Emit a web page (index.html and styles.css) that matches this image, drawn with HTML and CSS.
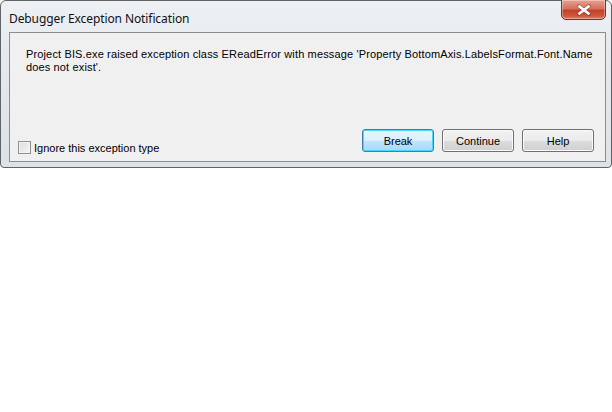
FILE: index.html
```html
<!DOCTYPE html>
<html>
<head>
<meta charset="utf-8">
<link rel="stylesheet" href="styles.css">
</head>
<body>
<div class="window">
  <div class="titlebar">
    <span class="title">Debugger Exception Notification</span>
  </div>
  <div class="close">
    <svg width="16" height="12" viewBox="0 0 16 12">
      <path d="M3 2 L13 10 M13 2 L3 10" stroke="#4a1a10" stroke-width="4" stroke-linecap="round" opacity="0.35"/>
      <path d="M3.5 2.5 L12.5 9.5 M12.5 2.5 L3.5 9.5" stroke="#ffffff" stroke-width="2.6" stroke-linecap="square"/>
    </svg>
  </div>
  <div class="client">
    <p class="message">Project BIS.exe raised exception class EReadError with message 'Property BottomAxis.LabelsFormat.Font.Name<br>does not exist'.</p>
    <div class="footer">
      <label class="check"><span class="box"></span><span>Ignore this exception type</span></label>
      <div class="buttons">
        <button class="btn default">Break</button>
        <button class="btn">Continue</button>
        <button class="btn">Help</button>
      </div>
    </div>
  </div>
</div>
</body>
</html>
```
FILE: styles.css
```css
html, body {
  margin: 0;
  padding: 0;
  background: #ffffff;
}
body {
  width: 612px;
  height: 412px;
  overflow: hidden;
  position: relative;
  font-family: "Liberation Sans", Arial, sans-serif;
}
.window {
  position: relative;
  width: 612px;
  height: 168px;
  box-sizing: border-box;
  border: 1px solid #5f6468;
  border-radius: 6px 6px 4px 4px;
  background: linear-gradient(180deg, #eef1f4 0%, #e6eaee 30%, #dde2e6 100%);
  padding: 0 5px 5px 8px;
  display: flex;
  flex-direction: column;
}
.titlebar {
  height: 31px;
  display: flex;
  align-items: center;
}
.title {
  font-family: "Noto Sans", "Open Sans", sans-serif;
  font-size: 12px;
  color: #111;
  letter-spacing: -0.1px;
  padding-top: 3px;
}
.close {
  position: absolute;
  left: 560px;
  top: -2px;
  width: 45px;
  height: 21px;
  box-sizing: border-box;
  border: 1px solid #7a3226;
  border-radius: 0 0 5px 5px;
  background: linear-gradient(180deg, #e8a293 0%, #d4705c 45%, #c2412a 55%, #d05a3c 85%, #e0806a 100%);
  display: flex;
  align-items: center;
  justify-content: center;
  box-shadow: inset 0 0 0 1px rgba(255,255,255,0.35);
}
.client {
  flex: 1;
  border: 1px solid #8a8c8e;
  background: #f0f0f0;
  display: flex;
  flex-direction: column;
  justify-content: space-between;
  padding: 15px 11px 9px 8px;
  box-sizing: border-box;
}
.message {
  margin: 0 0 0 8px;
  font-family: "Liberation Sans", Arial, sans-serif;
  font-size: 11px;
  line-height: 13px;
  letter-spacing: 0.14px;
  color: #000;
}
.footer {
  display: flex;
  align-items: flex-end;
  justify-content: space-between;
}
.check {
  display: flex;
  align-items: center;
  gap: 3px;
  font-family: "Liberation Sans", Arial, sans-serif;
  font-size: 11px;
  color: #000;
  margin-bottom: -2px;
}
.box {
  width: 11px;
  height: 11px;
  border: 1px solid #8e8f8f;
  background: linear-gradient(135deg, #dcdcdc, #f6f6f6);
  box-shadow: inset 0 0 0 1px #f4f4f4;
}
.buttons {
  display: flex;
  gap: 8px;
}
.btn {
  width: 72px;
  height: 23px;
  box-sizing: border-box;
  border: 1px solid #707070;
  border-radius: 3px;
  background: linear-gradient(180deg, #f2f2f2 0%, #ebebeb 50%, #dddddd 51%, #cfcfcf 100%);
  font-family: "Liberation Sans", Arial, sans-serif;
  font-size: 11px;
  color: #000;
  padding: 0;
  box-shadow: inset 0 0 0 1px #fbfbfb;
}
.btn.default {
  border-color: #3c7fb1;
  background: linear-gradient(180deg, #eaf6fd 0%, #d9f0fc 50%, #bee6fd 51%, #a7d9f5 100%);
  box-shadow: inset 0 0 0 1px #48d7fb;
}
```
